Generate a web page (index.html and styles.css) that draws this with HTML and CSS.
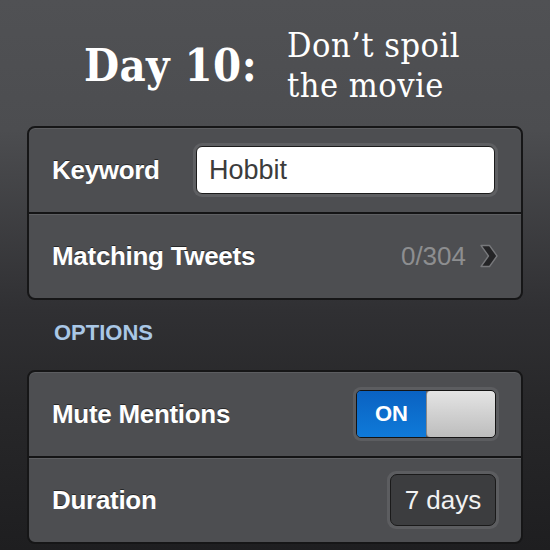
FILE: index.html
```html
<!DOCTYPE html>
<html>
<head>
<meta charset="utf-8">
<link rel="stylesheet" href="styles.css">
</head>
<body>
<div class="screen">
  <header class="title">
    <div class="day">Day 10:</div>
    <div class="sub">Don’t spoil<br>the movie</div>
  </header>

  <section class="card">
    <div class="row">
      <span class="label">Keyword</span>
      <div class="field"><span>Hobbit</span></div>
    </div>
    <div class="row">
      <span class="label">Matching Tweets</span>
      <span class="value">0/304</span>
      <svg class="chev" width="20" height="26" viewBox="0 0 20 26">
        <path d="M2 2.5 L10.5 2.5 L18 13 L10.5 23.5 L2 23.5 L9.5 13 Z" fill="#242426" stroke="#77787b" stroke-width="1.3" stroke-linejoin="round"/>
      </svg>
    </div>
  </section>

  <div class="section-head">OPTIONS</div>

  <section class="card">
    <div class="row">
      <span class="label">Mute Mentions</span>
      <div class="switch-ring">
        <div class="switch">
          <span class="on">ON</span>
          <span class="knob"></span>
        </div>
      </div>
    </div>
    <div class="row">
      <span class="label">Duration</span>
      <div class="pill-ring"><div class="pill">7 days</div></div>
    </div>
  </section>
</div>
</body>
</html>
```
FILE: styles.css
```css
html, body {
  margin: 0;
  padding: 0;
}
body {
  width: 550px;
  height: 550px;
  overflow: hidden;
  background: linear-gradient(to bottom, #505154 0px, #4c4d50 130px, #303033 310px, #28282a 400px, #1e1e20 550px);
  font-family: "Liberation Sans", Arial, sans-serif;
  color: #fff;
}
.screen {
  display: flex;
  flex-direction: column;
}
.title {
  height: 126px;
  display: flex;
  justify-content: center;
  align-items: flex-start;
  gap: 30px;
  padding-right: 6px;
  box-sizing: border-box;
}
.day {
  font-family: "DejaVu Serif", serif;
  font-weight: bold;
  font-stretch: condensed;
  font-size: 45px;
  letter-spacing: 0.4px;
  margin-top: 39px;
}
.sub {
  font-family: "DejaVu Serif", serif;
  font-stretch: condensed;
  font-size: 34px;
  letter-spacing: 0.5px;
  line-height: 40px;
  margin-top: 25px;
}
.card {
  margin: 0 27px;
  border: 2px solid #161617;
  border-radius: 8px;
  background: #4d4e51;
  box-shadow: inset 0 1px 0 #5c5d60;
  overflow: hidden;
}
.row {
  height: 84px;
  display: flex;
  align-items: center;
  padding: 0 26px 0 23px;
  box-sizing: border-box;
}
.row + .row {
  height: 86px;
  border-top: 2px solid #141415;
  box-shadow: inset 0 1px 0 #5e5f62;
}
.label {
  font-weight: bold;
  font-size: 26px;
  letter-spacing: -0.3px;
  flex: 1;
  text-shadow: 0 -1px 0 rgba(0,0,0,0.5);
}
.field {
  width: 305px;
  height: 54px;
  border-radius: 9px;
  background: #5e5f62;
  padding: 3px;
  box-sizing: border-box;
  margin-right: -3px;
}
.field span {
  display: flex;
  align-items: center;
  height: 100%;
  box-sizing: border-box;
  background: #fff;
  border: 1.5px solid #1c1c1c;
  border-radius: 6px;
  padding-left: 12px;
  font-size: 27px;
  color: #3c3c3c;
}
.value {
  color: #8d8e90;
  font-size: 26px;
  margin-right: 13px;
}
.chev {
  margin-right: -4px;
}
.section-head {
  height: 70px;
  box-sizing: border-box;
  padding: 20px 0 0 54px;
  color: #a9c7e6;
  font-weight: bold;
  font-size: 22px;
}
.switch-ring {
  width: 146px;
  height: 54px;
  border-radius: 8px;
  background: #5c5d60;
  padding: 3px;
  box-sizing: border-box;
  margin-right: -4px;
}
.switch {
  display: flex;
  height: 100%;
  border: 1.5px solid #141414;
  border-radius: 5px;
  overflow: hidden;
  box-sizing: border-box;
}
.on {
  width: 69px;
  background: linear-gradient(to bottom, #0a62c2, #0f7ad9);
  font-weight: bold;
  font-size: 22px;
  display: flex;
  align-items: center;
  justify-content: center;
}
.knob {
  flex: 1;
  background: linear-gradient(to bottom, #e4e4e4, #bdbdbd);
  border-left: 1px solid #888;
  border-radius: 4px;
}
.pill-ring {
  width: 112px;
  height: 58px;
  border-radius: 9px;
  background: #5c5d60;
  padding: 3px;
  box-sizing: border-box;
  margin-right: -4px;
}
.pill {
  height: 100%;
  box-sizing: border-box;
  border: 1.5px solid #1a1a1a;
  border-radius: 7px;
  background: #3c3d3f;
  display: flex;
  align-items: center;
  justify-content: center;
  font-size: 26px;
  color: #f2f2f2;
}
```
